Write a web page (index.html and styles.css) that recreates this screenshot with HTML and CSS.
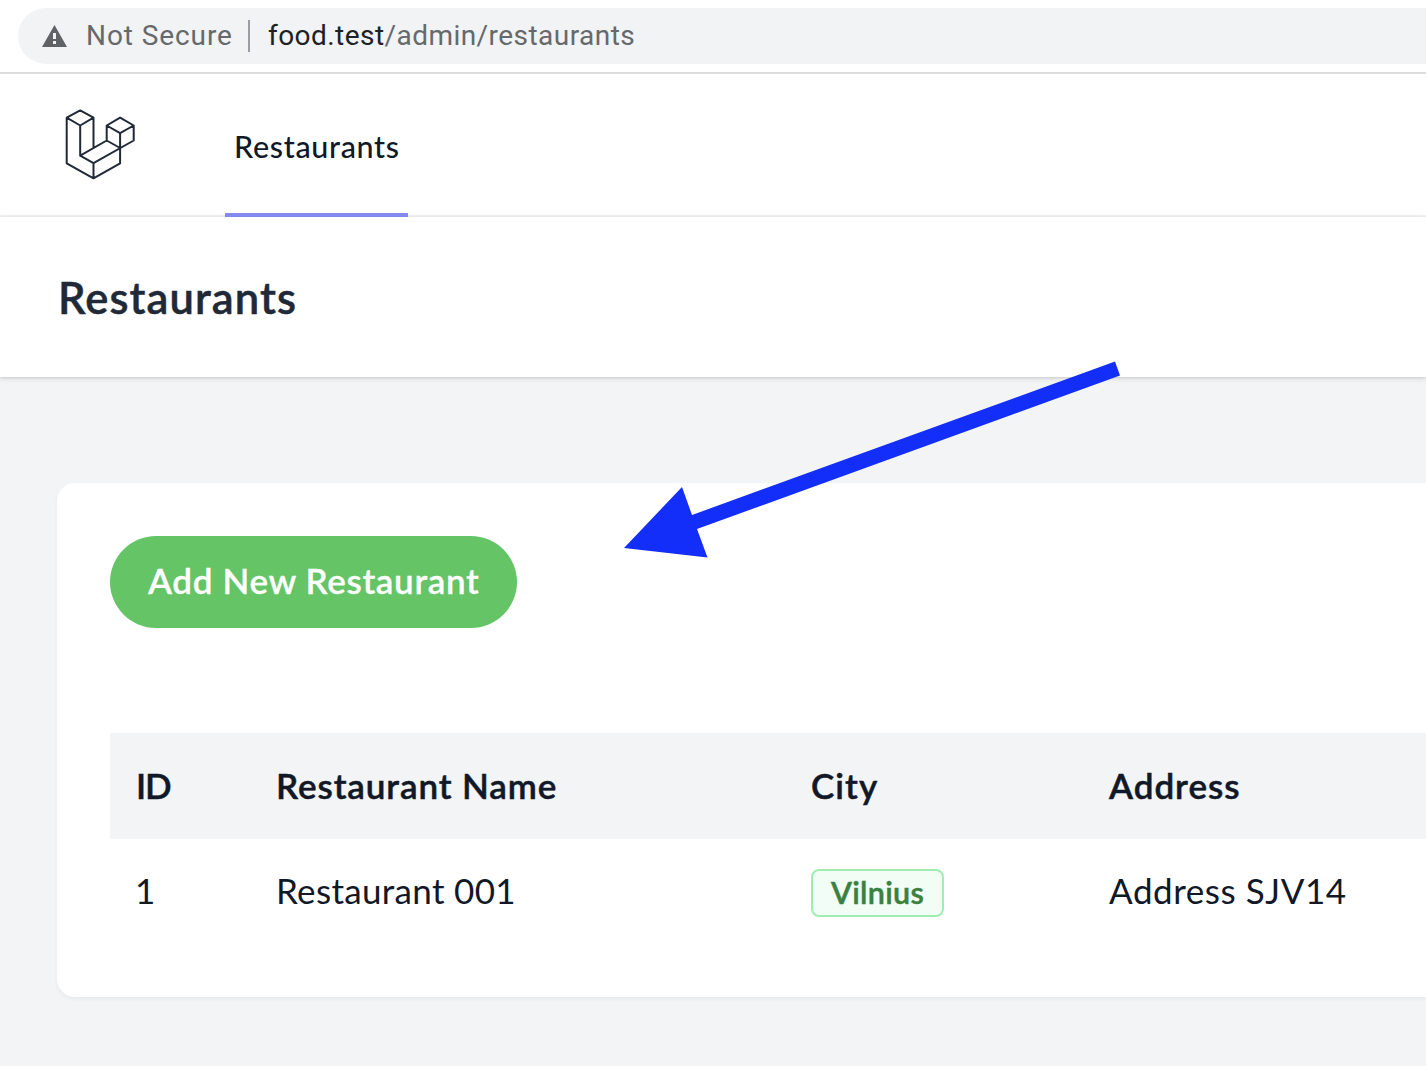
FILE: index.html
```html
<!DOCTYPE html>
<html lang="en">
<head>
<meta charset="utf-8">
<title>Restaurants</title>
<link rel="stylesheet" href="styles.css">
</head>
<body>
<div class="browser-bar">
  <div class="omnibox">
    <svg class="warning" width="26" height="24" viewBox="0 0 26 24"><path fill="#5f6368" fill-rule="evenodd" d="M12.500 1 25 23H0ZM11 9h3v6h-3ZM11 17h3v3h-3Z"/></svg>
    <span class="not-secure">Not Secure</span>
    <span class="divider"></span>
    <span class="url"><span class="host">food.test</span>/admin/restaurants</span>
  </div>
</div>
<nav class="nav">
  <svg class="logo" width="72" height="72" viewBox="65 109 72 72" fill="none" stroke="#1f2937" stroke-width="2" stroke-linejoin="round" stroke-linecap="round"><path d="M66.700 117.700 80.200 110.400 93.500 117.700 80.200 125.500ZM66.700 117.700V163.300L93.500 178.300 120.100 163.300V133.200L106.700 125.500 120.100 117.700 133.700 125.500 120.100 133.200M133.700 125.500V140.500L93.500 163.200 80.200 155.700V125.500M93.500 117.700V148M80.200 155.700 106.700 140.500V125.500M106.700 140.500 120.100 148M93.500 163.200V178.300"/></svg>
  <a class="tab"><span class="t-nav">Restaurants</span></a>
</nav>
<header class="page-header"><h1>Restaurants</h1></header>
<main class="main">
  <section class="card">
    <a class="button"><span class="t-button">Add New Restaurant</span></a>
    <div class="table">
      <div class="row head">
        <span class="t-id">ID</span><span class="t-name">Restaurant Name</span><span class="t-city">City</span><span class="t-address">Address</span>
      </div>
      <div class="row data">
        <span class="v-id">1</span><span class="v-name">Restaurant 001</span><span><span class="badge"><span class="t-badge">Vilnius</span></span></span><span class="v-address">Address SJV14</span>
      </div>
    </div>
  </section>
</main>
<svg class="arrow" width="500" height="200" viewBox="622 360 500 200"><path fill="#142ef9" d="M624 548 682 487 692 515 1115 361.500 1120 375.500 697 529 707.500 557.500Z"/></svg>
</body>
</html>
```
FILE: styles.css
```css
* { box-sizing: border-box; }
body {
  margin: 0;
  height: 1066px;
  position: relative;
  overflow: hidden;
  display: flex;
  flex-direction: column;
  background: #f3f4f6;
  color: #111827;
  font-family: Lato, "Open Sans", sans-serif;
  font-size: 35px;
  white-space: nowrap;
}
.browser-bar {
  height: 74px;
  padding: 8px 0 0 18px;
  background: #fff;
  border-bottom: 2px solid #dcdcdc;
}
.omnibox {
  height: 56px;
  display: flex;
  align-items: center;
  padding-left: 24px;
  border-radius: 28px 0 0 28px;
  background: #f1f3f4;
  color: #66696c;
  font: 28px/58px Roboto, sans-serif;
}
.warning { margin-right: 18px; }
.not-secure { width: 162px; letter-spacing: .92px; }
.divider { width: 2px; height: 32px; margin-right: 18px; background: #9b9ea1; }
.url { letter-spacing: .45px; }
.host { color: #202124; }
.nav {
  height: 143px;
  display: flex;
  align-items: flex-start;
  padding-left: 65px;
  background: #fff;
  border-bottom: 2px solid #efeff1;
}
.logo { margin-top: 35px; }
.tab {
  width: 183px;
  height: 143px;
  margin-left: 88px;
  padding-left: 9px;
  border-bottom: 4px solid #858bf2;
  font-size: 30.500px;
  font-weight: 500;
  line-height: 144px;
}
.t-nav { letter-spacing: .68px; }
.page-header {
  height: 160px;
  flex: none;
  padding-left: 58px;
  background: #fff;
  box-shadow: 0 2px 5px rgba(0,0,0,.1), 0 1px 2px rgba(0,0,0,.08);
}
h1 {
  margin: 0;
  color: #1f2937;
  font-size: 43.500px;
  font-weight: 600;
  line-height: 160px;
  letter-spacing: 1.1px;
  -webkit-text-stroke: .5px;
}
.main { padding: 106px 0 0 57px; }
.card {
  height: 514px;
  padding: 53px 0 0 53px;
  border-radius: 18px 0 0 18px;
  background: #fff;
  box-shadow: 0 2px 4px rgba(0,0,0,.05);
}
.button {
  width: 407px;
  height: 92px;
  display: flex;
  align-items: center;
  padding: 0 0 4px 38px;
  border-radius: 46px;
  background: #64c466;
  color: #fff;
  font-weight: 600;
}
.t-button { letter-spacing: .65px; -webkit-text-stroke: .3px; }
.table { margin-top: 105px; }
.row {
  height: 106px;
  display: grid;
  grid-template-columns: 140px 534px 298px 1fr;
  align-items: center;
  padding: 0 0 2px 27px;
}
.head { background: #f3f4f6; font-weight: 600; -webkit-text-stroke: .5px; }
.data { padding-bottom: 4px; }
.t-id { margin-left: -1px; letter-spacing: -1px; }
.t-name { margin-left: -1px; letter-spacing: .9px; }
.t-city { letter-spacing: 1.1px; }
.t-address { letter-spacing: 1px; }
.v-id { margin-left: -2px; }
.v-name { margin-left: -1px; letter-spacing: .32px; }
.v-address { letter-spacing: .57px; }
.badge {
  width: 133px;
  height: 48px;
  display: flex;
  align-items: center;
  margin-top: 6px;
  padding: 0 0 2px 18px;
  border: 2px solid #a0edb1;
  border-radius: 8px;
  background: #f2fdf5;
  color: #3a803f;
  font-size: 30.500px;
  font-weight: 600;
}
.t-badge { letter-spacing: .3px; -webkit-text-stroke: .5px; }
.arrow { position: absolute; left: 622px; top: 360px; }
```
